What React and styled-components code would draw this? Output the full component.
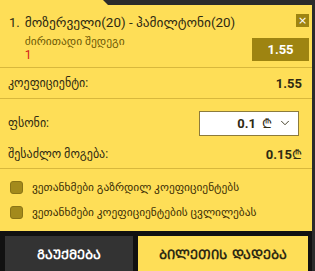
import React from "react";
import styled, { createGlobalStyle } from "styled-components";
import { ChevronDown } from "lucide-react";

const Global = createGlobalStyle`
  html, body { margin: 0; padding: 0; }
  body {
    font-family: Roboto, "DejaVu Sans", sans-serif;
    background: #2b2b2b;
  }
`;

const Frame = styled.div`
  width: 315px;
  height: 271px;
  display: flex;
  overflow: hidden;
  background: #2b2b2b;
`;

const Column = styled.div`
  width: 312px;
  display: flex;
  flex-direction: column;
`;

const TopStrip = styled.div`
  height: 5px;
  display: flex;
`;

const Tab = styled.div`
  width: 108px;
  background: #fede57;
  clip-path: polygon(0 0, 103px 0, 108px 100%, 0 100%);
`;

const Panel = styled.div`
  background: #fede57;
  color: #2f2a12;
`;

const BetItem = styled.div`
  height: 63px;
  box-sizing: border-box;
  display: flex;
  justify-content: space-between;
  padding: 9px 3px 6px 9px;
  border-bottom: 1px solid #d8b83c;
`;

const BetLeft = styled.div`
  display: flex;
  gap: 5px;
  padding-top: 1px;
`;

const Num = styled.span`
  font-size: 13px;
  line-height: 16px;
`;

const BetInfo = styled.div`
  display: flex;
  flex-direction: column;
`;

const Title = styled.div`
  font-size: 13.4px;
  line-height: 16px;
  color: #2f2a12;
  white-space: nowrap;
`;

const Market = styled.div`
  margin-top: 3px;
  font-size: 11.5px;
  line-height: 14px;
  color: #6e5a06;
`;

const Pick = styled.div`
  font-size: 12px;
  line-height: 14px;
  color: #d21f1b;
`;

const BetRight = styled.div`
  display: flex;
  flex-direction: column;
  align-items: flex-end;
  justify-content: space-between;
`;

const Close = styled.button`
  width: 13px;
  height: 13px;
  padding: 0;
  border: none;
  background: #9e8411;
  color: #fff;
  font-size: 11px;
  line-height: 13px;
  font-family: "DejaVu Sans", sans-serif;
`;

const Odds = styled.div`
  width: 57px;
  height: 23px;
  background: #9e8411;
  color: #fff;
  font-weight: 700;
  font-size: 13px;
  display: flex;
  align-items: center;
  justify-content: center;
`;

const Section = styled.div`
  padding: ${(p) => p.$pad || "0"};
  border-bottom: 1px solid #d8b83c;
`;

const Row = styled.div`
  height: ${(p) => p.$h}px;
  display: flex;
  align-items: center;
  justify-content: space-between;
  padding: 0 10px 0 8px;
  margin-top: ${(p) => p.$mt || 0}px;
`;

const Label = styled.span`
  font-size: 12px;
  color: #2f2a12;
`;

const Value = styled.span`
  font-size: 13px;
  font-weight: 700;
  color: #2f2a12;
`;

const Select = styled.div`
  width: 100px;
  height: 25px;
  margin-right: 3px;
  box-sizing: border-box;
  background: #fff;
  border: 1px solid #8c7b3c;
  display: flex;
  align-items: center;
  justify-content: flex-end;
  gap: 6px;
  padding-right: 6px;
  font-size: 13px;
  font-weight: 700;
  color: #2f2a12;
`;

const Lari = styled.span`
  font-weight: 400;
  font-family: "DejaVu Sans", sans-serif;
`;

const Checks = styled.div`
  background: #fede57;
  padding: 11px 0 0 10px;
  height: 62px;
  box-sizing: border-box;
  display: flex;
  flex-direction: column;
  gap: 11px;
`;

const CheckRow = styled.label`
  display: flex;
  align-items: center;
  gap: 9px;
  font-size: 11.4px;
  color: #3d2f05;
`;

const Box = styled.span`
  width: 13px;
  height: 13px;
  border-radius: 3px;
  background: #a38a1c;
  border: 1px solid #8a7416;
  box-sizing: border-box;
`;

const Footer = styled.div`
  flex: 1;
  background: #111;
  display: flex;
  gap: 5px;
  padding: 5px 4px 0 5px;
`;

const Button = styled.button`
  flex: ${(p) => (p.$primary ? "170px" : "128px")} 0 0;
  border: none;
  background: ${(p) => (p.$primary ? "#fede57" : "#333")};
  color: ${(p) => (p.$primary ? "#2f2a12" : "#fff")};
  font-family: "DejaVu Sans", "Noto Sans", sans-serif;
  font-size: 13px;
  font-weight: 700;
  padding: 0;
`;

export default function App() {
  return (
    <>
      <Global />
      <Frame>
        <Column>
          <TopStrip>
            <Tab />
          </TopStrip>
          <Panel>
            <BetItem>
              <BetLeft>
                <Num>1.</Num>
                <BetInfo>
                  <Title>მოზერველი(20) - ჰამილტონი(20)</Title>
                  <Market>ძირითადი შედეგი</Market>
                  <Pick>1</Pick>
                </BetInfo>
              </BetLeft>
              <BetRight>
                <Close>×</Close>
                <Odds>1.55</Odds>
              </BetRight>
            </BetItem>
            <Section>
              <Row $h={30}>
                <Label>კოეფიციენტი:</Label>
                <Value>1.55</Value>
              </Row>
            </Section>
            <Section $pad="11px 0 4px">
              <Row $h={26}>
                <Label>ფსონი:</Label>
                <Select>
                  <span>0.1</span>
                  <Lari>₾</Lari>
                  <ChevronDown size={14} strokeWidth={1.5} />
                </Select>
              </Row>
              <Row $h={20} $mt={8}>
                <Label>შესაძლო მოგება:</Label>
                <Value>
                  0.15<Lari>₾</Lari>
                </Value>
              </Row>
            </Section>
          </Panel>
          <Checks>
            <CheckRow>
              <Box />
              ვეთანხმები გაზრდილ კოეფიციენტებს
            </CheckRow>
            <CheckRow>
              <Box />
              ვეთანხმები კოეფიციენტების ცვლილებას
            </CheckRow>
          </Checks>
          <Footer>
            <Button>ᲒᲐᲣᲥᲛᲔᲑᲐ</Button>
            <Button $primary>ᲑᲘᲚᲔᲗᲘᲡ ᲓᲐᲓᲔᲑᲐ</Button>
          </Footer>
        </Column>
      </Frame>
    </>
  );
}
